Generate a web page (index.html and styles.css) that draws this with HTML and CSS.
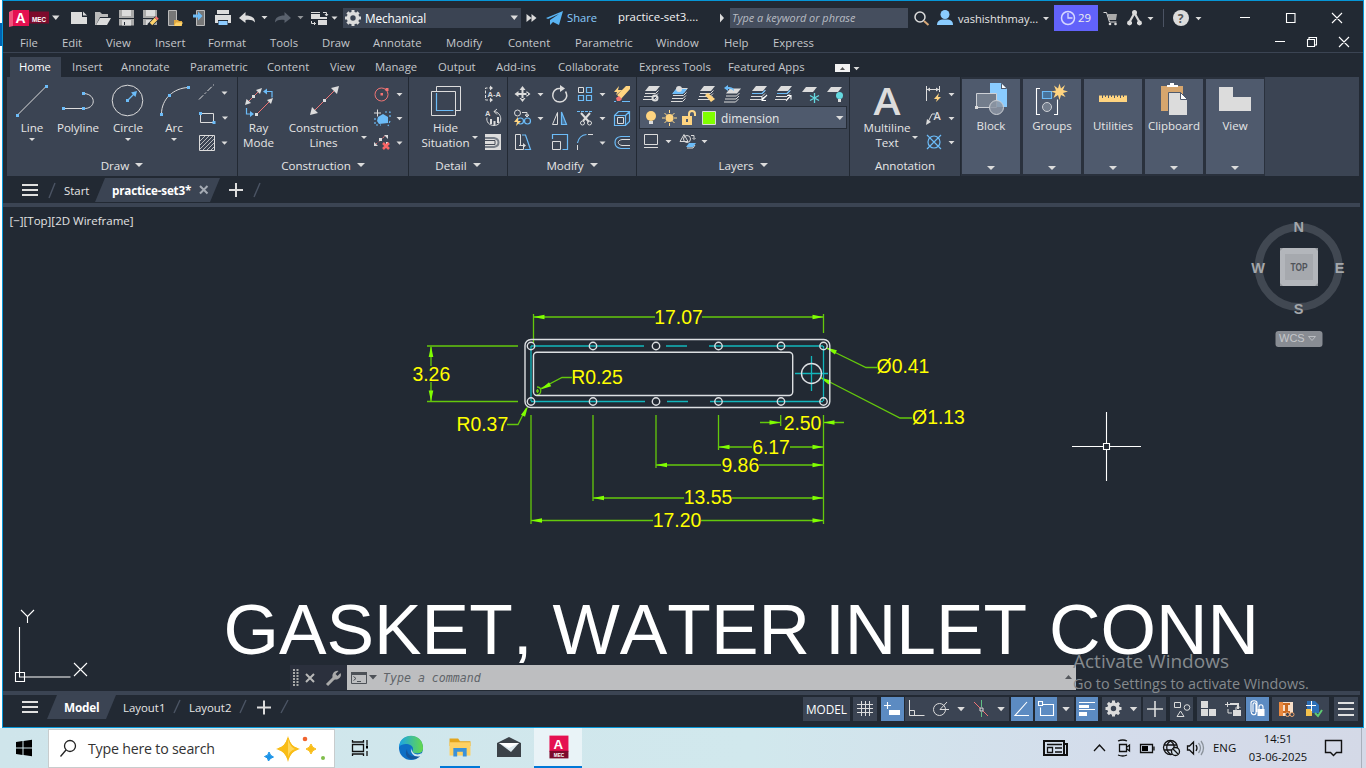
FILE: index.html
```html
<!DOCTYPE html>
<html lang="en">
<head>
<meta charset="utf-8">
<title>practice-set3</title>
<link rel="stylesheet" href="styles.css">
</head>
<body>
<svg width="0" height="0" class="defs"><defs>
<g id="stack"><path class="f" d="M5 0h11l-4 5h-11z"/><path class="s" d="M1 7.500h10.500l3-3M0 10.500h11l3-3M-1 13.500h11.500l3-3"/></g>
<g id="gear"><circle r="4.500" fill="none" stroke="#dcdcdc" stroke-width="3.600"/><path stroke="#dcdcdc" stroke-width="3" d="M0-8v3M0 5v3M-8 0h3M5 0h3M-5.600-5.600l2 2M5.600-5.600l-2 2M-5.600 5.600l2-2M5.600 5.600l-2-2"/></g>
<g id="caret"><path class="f" d="M-3-1.500h6l-3 3.200z"/></g>
<g id="bigcaret"><path class="f" d="M-3.700-2h7.500l-3.700 4.200z"/></g>
<g id="mark"><rect class="fb" x="-1.500" y="-1.500" width="3" height="3"/></g>
<g id="hole"><circle r="3.700"/></g>
<path id="ar" class="arrow" d="M0 0L11-2.300v4.600z"/>
</defs></svg>

<div class="desktop">
<div class="app">
<header class="titlebar">
<svg width="64" height="33" viewBox="3 1 64 33"><path fill="#f0527b" d="M9 12l4-2v16l-4 1z"/><path fill="#e51050" d="M13 10h16v16H13z"/><path fill="#7c0a2c" d="M29 11.500h20v12H29z"/><text x="15.500" y="23" font-family="Liberation Sans" font-size="14" font-weight="700" fill="#fff">A</text><text x="32" y="21.500" textLength="14" lengthAdjust="spacingAndGlyphs" font-family="Liberation Sans" font-size="8" font-weight="700" fill="#fff">MEC</text><path class="f" d="M52 15.500h7.500l-3.700 4.500z"/></svg>
<svg width="25" height="33" viewBox="67 1 25 33"><path class="f" d="M71 12h11v5h5v7H71z"/><path class="f" d="M83 11.500l4 4h-4z"/></svg>
<svg width="24" height="33" viewBox="92 1 24 33"><path fill="#bbb" d="M95 12h5l2 2h6v3h-8l-4 8h-1z"/><path class="f" d="M100 18h11l-4 7H96z"/></svg>
<svg width="24" height="33" viewBox="116 1 24 33"><path fill="#a9a9a9" d="M119 10h15v15.500h-15z"/><path class="f" d="M122 10h9v6h-9zM122 20h9v5.500h-9z"/><path fill="#222933" d="M119 18h15v1h-15zM124 22h1v3h-1z"/></svg>
<svg width="24" height="33" viewBox="140 1 24 33"><path fill="#a9a9a9" d="M143 10h14v15h-14z"/><path class="f" d="M146 10h9v6h-9zM146 20h6v5h-6z"/><path fill="#222933" d="M143 18h14v1h-14z"/><path stroke="#222933" stroke-width="5" d="M149 26l8-8"/><path stroke="#ffd36b" stroke-width="3.500" d="M151 24l5-5"/><path stroke="#fa6f6f" stroke-width="3.500" d="M156 19l1.500-1.500"/></svg>
<svg width="24" height="33" viewBox="164 1 24 33"><path fill="#777" stroke="#bbb" d="M168.500 10.500h8v15h-8z"/><path fill="#dfa842" d="M174 20h4l1 1h3v5h-8z"/><path fill="#ffd36b" d="M176 22.500h7l-2 3.500h-7z"/></svg>
<svg width="24" height="33" viewBox="188 1 24 33"><path fill="#777" stroke="#bbb" d="M196.500 10.500h8v15h-8z"/><path class="fb" d="M193 14.500h5v-3l4.500 4.500-4.500 4.500v-3h-5z"/></svg>
<svg width="24" height="33" viewBox="212 1 24 33"><path class="f" d="M217 10h12v4h-12zM215 15h16v8h-3v-3h-10v3h-3z"/><path fill="#8ccbff" d="M218.500 21h9v4h-9z"/></svg>
<svg width="34" height="33" viewBox="236 1 34 33"><path fill="#ddd" d="M239 18l6.500-6v3.500c6 0 9.500 2 9.500 7-2-2.500-5-3-9.500-2.500v3z"/><use href="#caret" x="264.500" y="17.500"/></svg>
<svg width="36" height="33" viewBox="270 1 36 33"><path fill="#59616d" d="M291 18l-6.500-6v3.500c-6 0-9.500 2-9.500 7 2-2.500 5-3 9.500-2.500v3z"/><use href="#caret" x="300.500" y="17.500" opacity=".6"/></svg>
<svg width="37" height="33" viewBox="306 1 37 33"><path class="f" d="M311 12h9v1h-9zM311 14h9v5h-9zM318 17h9v2h-9zM318 20h9v5h-9z"/><path class="s" d="M323 12.500h3.500v3M325 14l1.500 2 1.500-2M315.500 23.500h-4v-2.500M314 22l1.500 1.500-1.500 1.500"/><use href="#caret" x="334.500" y="18"/></svg>
<div class="workspace"><svg width="22" height="20" viewBox="343 8 22 20"><use href="#gear" x="353" y="18"/></svg><span>Mechanical</span><svg width="14" height="20" viewBox="508 8 14 20"><path class="f" d="M511.500 15.500h7.500l-3.700 4.500z"/></svg></div>
<svg width="46" height="33" viewBox="521 1 46 33"><path class="f" d="M526.500 14l5 4-5 4zM531.500 14l5 4-5 4z"/><path fill="#59b4f3" d="M546 18l17-7-4 14-6-3-3 3v-5l9-6-11 5z"/></svg>
<span class="share">Share</span><span class="doc">practice-set3....</span>
<svg width="12" height="33" viewBox="718 1 12 33"><path class="f" d="M720 13.500l4 4.500-4 4.500z"/></svg>
<div class="find">Type a keyword or phrase</div>
<svg width="50" height="33" viewBox="908 1 50 33"><circle cx="920" cy="17" r="5" class="s" stroke-width="1.500"/><path stroke="#d8a878" stroke-width="2" d="M924 21l4.500 4"/><circle class="fu" cx="945" cy="14.500" r="4.500"/><path class="fu" d="M937 25c0-4 2.500-5 5-5.500h6c3 .5 5 1.500 5 5.500z"/></svg>
<span class="account">vashishthmay...</span>
<svg width="14" height="33" viewBox="1040 1 14 33"><use href="#caret" x="1046" y="18.500"/></svg>
<div class="trial"><svg width="20" height="20" viewBox="0 0 20 20"><circle cx="10" cy="10" r="6.500" fill="none" stroke="#d6d7ff" stroke-width="1.500"/><path fill="none" stroke="#d6d7ff" stroke-width="1.300" d="M10 5v5h4.500"/></svg>29</div>
<svg width="106" height="33" viewBox="1098 1 106 33"><path class="s" d="M1103.500 12.500h3l3 9.500h7"/><path fill="#a9a9a9" d="M1107.500 14h9.500l-1 6h-7z"/><circle class="f" cx="1110" cy="24" r="1.300"/><circle class="f" cx="1115.500" cy="24" r="1.300"/><path fill="none" stroke="#d5d5d5" stroke-width="2.200" d="M1134.500 13l-5.500 10h11l-5.500-10"/><path fill="#222933" d="M1132 22h5v3h-5z"/><circle class="f" cx="1134.500" cy="12.500" r="2.500"/><circle class="f" cx="1129.500" cy="23" r="2.400"/><circle class="f" cx="1139.500" cy="23" r="2.400"/><use href="#caret" x="1150.500" y="18.500"/><path stroke="#4b5363" d="M1163.500 9v18"/><circle class="f" cx="1181" cy="18" r="8"/><text x="1177.700" y="22.500" font-family="Noto Sans" font-weight="700" font-size="12" fill="#555">?</text><use href="#caret" x="1198.500" y="18.500"/></svg>
<svg class="winctl" width="120" height="33" viewBox="1230 1 120 33"><path class="sw" d="M1240 17.500h10M1286.500 13.500h8.500v9h-8.500zM1332 13l10 10M1342 13l-10 10"/></svg>
</header>

<nav class="menubar"><span>File</span><span>Edit</span><span>View</span><span>Insert</span><span>Format</span><span>Tools</span><span>Draw</span><span>Annotate</span><span>Modify</span><span>Content</span><span>Parametric</span><span>Window</span><span>Help</span><span>Express</span>
<svg class="docctl" width="90" height="18" viewBox="1270 34 90 18"><path class="sw" d="M1275 41.500h10M1307.500 39.500h7v7h-7zM1309 39v-1.500h7.500v7.500h-1.500M1339 37l10 10M1349 37l-10 10"/></svg></nav>

<nav class="tabs"><b>Home</b><span>Insert</span><span>Annotate</span><span>Parametric</span><span>Content</span><span>View</span><span>Manage</span><span>Output</span><span>Add-ins</span><span>Collaborate</span><span>Express Tools</span><span>Featured Apps</span>
<svg width="30" height="20" viewBox="832 57 30 20"><path fill="#f2f2f2" d="M835 64h15v8h-15z"/><path fill="#555" d="M840 70h5l-2.500-3z"/><use href="#caret" x="856.500" y="68.500"/></svg></nav>

<section class="ribbon">
<div class="panel draw"><div class="tools">
<div class="big"><svg width="36" height="36" viewBox="14 84 36 36"><path class="s" d="M17.500 115l29-29"/><use href="#mark" x="17.500" y="115.500"/><use href="#mark" x="46.500" y="86.500"/></svg><span>Line</span><i></i></div>
<div class="big"><svg width="36" height="36" viewBox="60 84 36 36"><path class="s" d="M64 108.500h19c13 1 14-14 1-15"/><use href="#mark" x="63.500" y="108.500"/><use href="#mark" x="83.500" y="108.500"/><use href="#mark" x="83.500" y="93.500"/></svg><span>Polyline</span></div>
<div class="big"><svg width="36" height="36" viewBox="110 84 36 36"><circle class="s" cx="127.500" cy="100.500" r="15.300"/><path class="sb" d="M128 100l6-6"/><path class="fb" d="M137 91l-1.500 6-4.500-4.500z"/><use href="#mark" x="127.500" y="100.500"/></svg><span>Circle</span><i></i></div>
<div class="big"><svg width="36" height="36" viewBox="156 84 36 36"><path class="s" d="M161.500 114c0-15 12-26 27-26.500"/><use href="#mark" x="161.500" y="114.500"/><use href="#mark" x="169.500" y="95.500"/><use href="#mark" x="188.500" y="87.500"/></svg><span>Arc</span><i></i></div>
<div class="small">
<svg width="46" height="24" viewBox="191 82 46 24"><path class="s" stroke-dasharray="6 2 2 2" d="M199 99.500l15-15"/><use href="#caret" x="224.500" y="93"/></svg>
<svg width="46" height="24" viewBox="191 106 46 24"><path class="s" d="M200.500 113.500h13v9h-13z"/><use href="#mark" x="200.500" y="113.500"/><use href="#mark" x="214" y="122.500"/><use href="#caret" x="225" y="118"/></svg>
<svg width="46" height="24" viewBox="191 130 46 24"><path class="s" d="M199.500 135.500h15v15h-15z"/><path class="s" stroke-width=".8" d="M200 141l5-5M200 145l9-9M200 149l13-13M203 150l11-11M207 150l7-7M211 150l3-3"/><use href="#caret" x="224.500" y="143"/></svg></div>
</div><div class="name">Draw<u></u></div></div>

<div class="panel construction"><div class="tools">
<div class="big"><svg width="36" height="36" viewBox="241 84 36 36"><path class="sr" d="M247 103l12-12M257 114l14-14"/><path class="f" d="M262 88l-2 6-4-4zM245 105l1.500-6 4.500 4zM273 98l-2 6-4-4zM252 95h3v3h-3zM255 113h3v3h-3z"/><path class="sb" d="M266 91.500h6v6M246.500 108v6h5"/><path class="fb" d="M263 91.500l4-3v6zM254 114l-4-3v6z"/></svg><span>Ray<br>Mode</span></div>
<div class="big"><svg width="36" height="36" viewBox="305 84 36 36"><path class="sr" d="M311 113l25-25"/><path class="f" d="M338 86l-2 8-6-6zM309 115l2-8 6 6zM322 99h3v3h-3z"/></svg><span>Construction<br>Lines</span></div>
<div class="small">
<svg width="40" height="24" viewBox="368 82 40 24"><circle class="sr" cx="381.500" cy="94.500" r="6.500"/><path fill="#f47272" d="M380.500 93h2.500v2.500h-2.500zM385.500 88h3v3h-3z"/><use href="#caret" x="399.500" y="94.500"/></svg>
<svg width="40" height="24" viewBox="368 106 40 24"><path class="fb" d="M378 117l5-3 5 3v6l-9 1-2-3z"/><path class="s" d="M374 113h7M377.500 109.500v7"/><path class="sb" stroke-dasharray="2 2" d="M375 118v7h6M385 112h5v6M390 121l-2 5"/><use href="#caret" x="399.500" y="118.500"/></svg>
<svg width="40" height="24" viewBox="368 130 40 24"><path class="sr" stroke-dasharray="3 2" d="M375 145l11-10"/><path class="f" d="M384 135h4v4zM374 142v4h4zM379 138h3v3h-3zM386 142h2v2h-2z"/><path stroke="#fa6565" stroke-width="2.500" d="M383 143l6 6M389 143l-6 6"/><use href="#caret" x="399.500" y="143"/></svg></div>
</div><i class="side s1"></i><div class="name">Construction<u></u></div></div>

<div class="panel detail"><div class="tools">
<div class="big"><svg width="36" height="36" viewBox="427 84 36 36"><path class="s" d="M435.500 91v-4.500h24v24h-4.500M430.500 91.500h24v24h-24z"/><path class="sb" d="M435.500 93v17.500h17"/></svg><span>Hide<br>Situation</span></div>
<div class="small">
<svg width="25" height="24" viewBox="482 82 25 24"><path class="s" stroke-dasharray="3 1.500" d="M492 88h-6.500v12h6.500"/><path class="f" d="M490 85.500l3 2.500-3 2.500zM490 97.500l3 2.500-3 2.500z"/><text class="tiny" x="487.500" y="97">A-A</text></svg>
<svg width="25" height="24" viewBox="482 106 25 24"><path class="s" d="M494 111.500c9 1 9 14 0 14-5 0-8-4-7-8M497 109l-3 2.500 3 3"/><text class="tiny" x="485" y="116">A</text><path class="f" d="M490 119h2v5h-2zM493.500 121h2v4h-2zM497 117h2v6h-2z"/></svg>
<svg width="25" height="24" viewBox="482 130 25 24"><path class="f" d="M485 134h16v16h-16z"/><path fill="none" stroke="#777e88" stroke-width="2" d="M485 138h9c6 1 6 8 0 9h-9"/><path fill="none" stroke="#444b57" d="M485 140.500h10v4h-10"/></svg></div>
</div><i class="side s2"></i><div class="name">Detail<u></u></div></div>

<div class="panel modify"><div class="tools grid">
<svg width="38" height="24" viewBox="508 82 38 24"><path class="f" d="M522.500 86l3 4h-6zM522.500 102l3-4h-6zM514.500 94l4-3v6zM530.500 94l-4-3v6zM521.500 89h2v10h-2zM517 93h11v2h-11z"/><use href="#caret" x="540.500" y="94.500"/></svg>
<svg width="26" height="24" viewBox="546 82 26 24"><path class="s" stroke-width="1.500" d="M561 88.500c-9-1-11 10-4 13 7 2 12-4 8.500-10"/><path class="f" d="M560 85l5 3.500-5 3.500z"/></svg>
<svg width="36" height="24" viewBox="572 82 36 24"><path class="s" d="M578.500 87.500h5v5h-5z"/><path class="sb" d="M586.500 87.500h5v5h-5zM578.500 95.500h5v5h-5zM586.500 95.500h5v5h-5z"/><use href="#caret" x="602.500" y="94.500"/></svg>
<svg width="28" height="24" viewBox="608 82 28 24"><path class="fy" d="M626 86h4v3l-9 10-4-4zM614 92l5-6-1 4h4l-6 5 1-3z"/><path fill="#f47272" d="M619 96l3 3-2 2h-3l-1-3z"/><path class="sb" d="M614 101.500h2M622 101.500h8"/></svg>
<svg width="38" height="24" viewBox="508 106 38 24"><circle class="s" cx="517.500" cy="113" r="3"/><path class="s" d="M522 112.500h5v3M525 115h4l-2 2z"/><circle class="sb" cx="520.500" cy="121" r="3"/><circle class="sb" cx="527.500" cy="121" r="3"/><path class="fy" d="M518 117l-4 5h3l-1 4 5-5h-3z"/><use href="#caret" x="540.500" y="118.500"/></svg>
<svg width="26" height="24" viewBox="546 106 26 24"><path class="s" d="M552.500 124.500l5-12v12z"/><path class="sb" fill="#48739b" d="M561.500 112l5 12.500h-5z"/></svg>
<svg width="36" height="24" viewBox="572 106 36 24"><path class="sb" stroke-dasharray="3 1" d="M577 111.500h16"/><path class="s" stroke-width="2" d="M581 113l8 9M590 113l-7 8"/><circle class="s" cx="582.500" cy="123" r="2"/><circle class="s" cx="589.500" cy="123" r="2"/><use href="#caret" x="602.500" y="118.500"/></svg>
<svg width="28" height="24" viewBox="608 106 28 24"><path class="sb" d="M614.500 115.500l4-4h11v10l-4 4h-11zM614.500 115.500h11v10M625.500 115.500l4-4"/><path class="s" d="M617.500 117.500h6v6h-6z"/></svg>
<svg width="38" height="24" viewBox="508 130 38 24"><path class="s" d="M520.500 145v-10.500h-5v15h8v-4M519 145.500h5"/><path class="f" d="M523 143l3 2.500-3 2.500z"/><path class="sb" d="M522 135h3.500l5 14.500h-6"/></svg>
<svg width="26" height="24" viewBox="546 130 26 24"><path class="sb" d="M552.500 139v-4.500h15v15h-5"/><path class="s" d="M552.500 141.500h8v8h-8z"/></svg>
<svg width="36" height="24" viewBox="572 130 36 24"><path class="sb" d="M577.500 143c1-5 4-8 9-8.500"/><path class="s" d="M577.500 145v5M588 134.500h5"/><use href="#caret" x="602.500" y="143"/></svg>
<svg width="28" height="24" viewBox="608 130 28 24"><path class="sb" d="M630 136.500h-9c-8 1-8 11 0 12h9"/><path class="s" d="M630 139.500h-8c-5 1-5 5 0 6h8"/></svg>
</div><div class="name">Modify<u></u></div></div>

<div class="panel layers"><div class="layer-tools">
<div class="lrow">
<svg width="30" height="24" viewBox="639 82 30 24"><use href="#stack" x="644" y="86"/><circle cx="655" cy="98" r="2.500" class="s" stroke-width="2"/></svg>
<svg width="26" height="24" viewBox="669 82 26 24"><use href="#stack" x="672" y="88"/><path class="fb" d="M672 94h11l4-5h-11z"/><circle class="f" cx="679" cy="89" r="3"/></svg>
<svg width="27" height="24" viewBox="695 82 27 24"><use href="#stack" x="699" y="86"/><path class="fy" d="M705 95l3-2 7 6-4 3z"/></svg>
<svg width="26" height="24" viewBox="722 82 26 24"><use href="#stack" x="725" y="88.500"/><path class="fb" d="M724 88l4-3v2c4 0 6 1 6 4-2-2-3-2-6-2v2z"/></svg>
<svg width="26" height="24" viewBox="748 82 26 24"><use href="#stack" x="751" y="86"/><path class="sb" d="M752 93.500h10l3-3"/><path class="sw" d="M767 95l-5 5M762 96.500v4h4"/></svg>
<svg width="26" height="24" viewBox="774 82 26 24"><use href="#stack" x="776" y="86"/><path class="sb" d="M777 93.500h10l3-3"/><path class="sw" d="M786 101l4.500-5M787 95.500h4v4"/></svg>
<svg width="25" height="24" viewBox="800 82 25 24"><path class="f" d="M806 87h11l-4 5h-11z"/><path stroke="#65d9e0" stroke-width="1.300" d="M814.500 93v10M810 95.500l9 5M810 100.500l9-5"/></svg>
<svg width="23" height="24" viewBox="825 82 23 24"><path class="f" d="M831 87h11l-4 5h-11z"/><circle fill="#65d9e0" cx="839.500" cy="95.500" r="3.500"/><path class="f" d="M838 99h3v3h-3z"/></svg>
</div>
<div class="combo"><svg width="80" height="20" viewBox="640 108 80 20"><circle class="fy" cx="651" cy="116" r="5"/><path class="f" d="M649 121h4v3h-4z"/><circle class="fy" cx="669.500" cy="118" r="4"/><path stroke="#ffd98a" d="M669.500 110v3M669.500 123v3M662 118h3M674 118h3M664.500 113l2 2M674.500 113l-2 2M664.500 123l2-2M674.500 123l-2-2"/><path class="fy" d="M682 116h10v9h-10z"/><path fill="none" stroke="#ffd98a" stroke-width="2" d="M689 116v-2c0-4 6-4 6 0v2"/><path fill="#4f5a6d" d="M686 119h2v3h-2z"/><path fill="#80ff00" stroke="#d9d9d9" d="M702.500 111.500h13v13h-13z"/></svg><span>dimension</span><svg width="12" height="20" viewBox="835 108 12 20"><path class="f" d="M837 116h7.500l-3.700 4z"/></svg></div>
<div class="lrow">
<svg width="36" height="24" viewBox="639 130 36 24"><path class="s" d="M644.500 135.500h13v10h-13zM644 148.500h14"/><use href="#caret" x="668.500" y="142.500"/></svg>
<svg width="36" height="24" viewBox="675 130 36 24"><path class="s" d="M680 142.500l4-7 4 7z"/><circle class="s" cx="687" cy="140" r="3.500"/><path class="s" d="M691 136.500h3v3M692.500 139l1.500 1.500 1.500-1.500M687 149h6l2-3"/><path class="fb" d="M689 144h7l-3 4h-7z"/><use href="#caret" x="704.500" y="142.500"/></svg>
</div></div><div class="name">Layers<u></u></div></div>

<div class="panel annotation"><div class="tools">
<div class="big"><svg width="36" height="36" viewBox="868 84 36 36"><text x="872.500" y="115" textLength="27" lengthAdjust="spacingAndGlyphs" font-family="Open Sans" font-weight="600" font-size="38" fill="#dcdcdc">A</text></svg><span>Multiline<br>Text</span></div>
<div class="small">
<svg width="36" height="24" viewBox="924 82 36 24"><path class="s" d="M926.500 86v15M939.500 86v6M927 89.500h12"/><path class="f" d="M927 89.500l3-2v4zM939 89.500l-3-2v4z"/><path class="fy" d="M939 93l-5 6h3l-1 3 5-5h-3z"/><use href="#caret" x="951.500" y="94.500"/></svg>
<svg width="36" height="24" viewBox="924 106 36 24"><path class="s" d="M928 122l4-8h3"/><path class="f" d="M926 125l1-6 4 3z"/><text x="933.500" y="120" font-family="Open Sans" font-size="11" font-weight="600" fill="#dcdcdc">A</text><use href="#caret" x="951.500" y="118.500"/></svg>
<svg width="36" height="24" viewBox="924 130 36 24"><circle class="sb" cx="934" cy="142" r="6"/><path class="sb" d="M927 135l14 14M941 135l-14 14"/><use href="#caret" x="951.500" y="142.500"/></svg></div>
</div><i class="side s3"></i><div class="name">Annotation</div></div>

<div class="groups">
<div class="group"><svg width="46" height="38" viewBox="968 81 46 38"><path class="fu" d="M990 83h11l6 6v18h-17z"/><path fill="#4f5a6d" d="M1001 83v6h6z"/><path fill="#fff" d="M1002 84l4 4h-4z"/><path fill="#737d8c" stroke="#cdd0d5" d="M976.500 93.500h20v14h-20z"/><circle fill="#8c95a3" fill-opacity=".85" stroke="#cdd0d5" cx="996.500" cy="107.500" r="7"/><path class="f" d="M975 106h3v3h-3z"/></svg><span>Block</span><u></u></div>
<div class="group"><svg width="46" height="38" viewBox="1029 81 46 38"><path class="sw" d="M1040 88.500h-3.500v26h3.500M1054 114.500h3.500v-15"/><path class="sb" fill="#52779a" d="M1042.500 91.500h9v7h-9z"/><circle cx="1047" cy="107" r="4.500" fill="#737d8c" stroke="#cdd0d5"/><path class="fy" d="M1059.500 83.500l1.500 5 4-3.500-2 5 5 1.500-5 1.500 2.500 4-4.500-2-1.500 5-1.500-5-4.500 3 2-5-4.500-1.500 5-1-2-5 4 3z"/></svg><span>Groups</span><u></u></div>
<div class="group"><svg width="46" height="38" viewBox="1090 81 46 38"><path class="fy" d="M1099 95.500h28v6.500h-28z"/><path stroke="#4f5a6d" d="M1102.500 95v3M1105.500 95v2M1108.500 95v3M1111.500 95v2M1114.500 95v3M1117.500 95v2M1120.500 95v3M1123.500 95v2"/></svg><span>Utilities</span><u></u></div>
<div class="group"><svg width="46" height="38" viewBox="1151 81 46 38"><path fill="#d7a66d" d="M1161 86h22v25h-22z"/><path fill="#fff" d="M1167 87v-2h3v-2h4v2h4v2z"/><path fill="#dcdcdc" stroke="#4f5a6d" d="M1168.500 92.500h12l7 7v20h-19z"/><path fill="#fff" stroke="#4f5a6d" d="M1180.500 92.500v7h7z"/><path fill="#4f5a6d" d="M1168 115h20v4h-20z"/></svg><span>Clipboard</span><u></u></div>
<div class="group"><svg width="46" height="38" viewBox="1212 81 46 38"><path class="f" d="M1219 87h14v10h18v14h-32z"/></svg><span>View</span><u></u></div>
</div>
</section>

<div class="filetabs">
<svg width="61" height="26" viewBox="3 178 61 26"><path class="bars" d="M22 186h16M22 191h16M22 196h16"/><path class="slash" d="M49 199l6-15"/></svg>
<span class="start">Start</span>
<div class="filetab"><b>practice-set3*</b><svg width="10" height="10" viewBox="0 0 10 10"><path stroke="#a5abb4" stroke-width="2" d="M1 1l7.500 7.500M8.500 1l-7.500 7.500"/></svg></div>
<svg width="46" height="26" viewBox="220 178 46 26"><path stroke="#ddd" stroke-width="2" d="M229 191h14M236 184v14"/><path class="slash" d="M254 198l6-14"/></svg>
</div>

<main class="viewport">
<svg class="drawing" width="1357" height="484" viewBox="3 207 1357 484">
<text class="vp" x="9.500" y="225" textLength="124">[−][Top][2D Wireframe]</text>
<g class="dim">
<path d="M533.500 314v29M823.500 314v19M534 317h121M702 317h121M427 346h91M427 401.500h91M431 347v19M431 382v19M531 415v109M593 415v86M656 415v53M718.500 415v35M780.700 415v11M823.500 415v109M760 422.500h21M824 422.500h20M719 447h33M790 447h33M656 465h65M759 465h64M593 498h91M732 498h91M531 520.500h122M701 520.500h122M826 348l40 19.500h11M820 377l80 41h12M540 389l22-11.500h10M507 424.500h11l8-16"/>
<path d="M537 395c5-1 5-8 0-8M537.500 389v4M536 391h3"/>
<use href="#ar" x="533.500" y="317"/><use href="#ar" x="718.500" y="447"/><use href="#ar" x="656" y="465"/><use href="#ar" x="593" y="498"/><use href="#ar" x="531" y="520.500"/><use href="#ar" x="823.500" y="422.500"/>
<use href="#ar" transform="translate(823.500 317) rotate(180)"/><use href="#ar" transform="translate(780.500 422.500) rotate(180)"/><use href="#ar" transform="translate(823.500 447) rotate(180)"/><use href="#ar" transform="translate(823.500 465) rotate(180)"/><use href="#ar" transform="translate(823.500 498) rotate(180)"/><use href="#ar" transform="translate(823.500 520.500) rotate(180)"/>
<use href="#ar" transform="translate(431 346) rotate(90)"/><use href="#ar" transform="translate(431 401.500) rotate(-90)"/><use href="#ar" transform="translate(826 347.500) rotate(26)"/><use href="#ar" transform="translate(820 377.500) rotate(27)"/><use href="#ar" transform="translate(540.500 389.500) rotate(-29)"/><use href="#ar" transform="translate(528 406) rotate(117)"/>
</g>
<path class="center" d="M531 346h113M666 346h21M709 346h114M531 401.500h114M667 401.500h21M710 401.500h113M531 346v55M823.500 346v55M795 373.500h33M811.500 356v35"/>
<g class="part"><rect x="525" y="339.500" width="304.800" height="68" rx="6"/><rect x="533.500" y="352.200" width="259.200" height="43.300" rx="3.500"/><circle cx="811.500" cy="373.500" r="10"/>
<use href="#hole" x="531" y="346"/><use href="#hole" x="593" y="346"/><use href="#hole" x="656" y="346"/><use href="#hole" x="718.500" y="346"/><use href="#hole" x="781" y="346"/><use href="#hole" x="823.500" y="346"/><use href="#hole" x="531" y="401.500"/><use href="#hole" x="593" y="401.500"/><use href="#hole" x="656" y="401.500"/><use href="#hole" x="718.500" y="401.500"/><use href="#hole" x="781" y="401.500"/><use href="#hole" x="823.500" y="401.500"/></g>
<g class="val"><text x="678.500" y="323.500">17.07</text><text x="431.300" y="380.500">3.26</text><text x="597" y="384.300">R0.25</text><text x="482.300" y="431.300">R0.37</text><text x="802.500" y="429.500">2.50</text><text x="771" y="453.700">6.17</text><text x="740.300" y="471.500">9.86</text><text x="708" y="504.300">13.55</text><text x="677" y="526.500">17.20</text><text x="903" y="373.300">Ø0.41</text><text x="938.500" y="424.300">Ø1.13</text></g>
<text class="caption" y="654.300"><tspan x="223.500">GASKET,</tspan> <tspan x="552.500">WATER</tspan> <tspan x="825">INLET</tspan> <tspan x="1049">CONN</tspan></text>
<path class="sw" d="M1072 446.500h31M1110 446.500h31M1106.500 412v31M1106.500 450v31M1103.500 443.500h6v6h-6z"/>
<path class="sw" d="M19.500 627v50h51M15.500 672.500h9v9h-9zM21 610l6.500 6.500v6.500M34 610l-6.500 6.500M74 663l13 13M87 663l-13 13"/>
<circle cx="1298.700" cy="267" r="40" fill="none" stroke="#414852" stroke-width="8"/>
<g class="compass"><text x="1298.700" y="232">N</text><text x="1258.200" y="272.500">W</text><text x="1339.500" y="272.500">E</text><text x="1298.700" y="313.500">S</text></g>
<path fill="#92969b" d="M1280 248h38v38h-38z"/><path fill="#b3b6bb" d="M1283 248h32l3 3v32l-3 3h-32l-3-3v-32z"/><path fill="#a6a9ae" d="M1285 254h28v26h-28z"/><text x="1299" y="271" text-anchor="middle" textLength="17" lengthAdjust="spacingAndGlyphs" font-family="Liberation Sans" font-size="10" font-weight="700" fill="#4f5359">TOP</text>
<rect x="1275.500" y="331" width="47" height="16" rx="3" fill="#888c93"/><text x="1279" y="342" font-family="Liberation Sans" font-size="11" fill="#c5c7ca">WCS</text><path fill="none" stroke="#babdc1" d="M1308.500 336.500h7l-3.500 4z"/>
</svg>
<div class="watermark"><p>Activate Windows</p><small>Go to Settings to activate Windows.</small></div>
<div class="command"><svg width="57" height="25" viewBox="290 665 57 25"><path stroke="#aaa" stroke-width="2" stroke-dasharray="2 1" d="M294 669v17M297.500 669v17"/><path stroke="#b8b8b8" stroke-width="2" d="M306 674l8 8M314 674l-8 8"/><path stroke="#aaa" stroke-width="3" d="M327 685l7-7"/><path fill="#aaa" d="M338.500 671c-4-1-8 4-5 8 4 2 9-2 7-6l-3 3-2-2z"/></svg>
<div class="cmdin"><svg width="36" height="25" viewBox="347 665 36 25"><path fill="none" stroke="#4d5157" d="M351.500 672.500h15v11h-15z"/><path fill="#4d5157" d="M351 672h16v3h-16zM369 675h8l-4 4.500z"/><path fill="none" stroke="#4d5157" d="M353.500 676.500l2.500 2-2.500 2M357 681.500h4"/></svg><span>Type a command</span><svg class="up" width="14" height="25" viewBox="1062 665 14 25"><path fill="#55585d" d="M1065 679h7l-3.500-4z"/></svg></div></div>
</main>

<footer class="status">
<svg width="44" height="26" viewBox="3 695 44 26"><path class="bars" d="M22 702h16M22 707h16M22 712h16"/></svg>
<div class="model">Model</div><span class="lay">Layout1</span><svg width="15" height="26" viewBox="170 695 15 26"><path class="slash" d="M174 713l6-13"/></svg><span class="lay">Layout2</span>
<svg width="60" height="26" viewBox="236 695 60 26"><path class="slash" d="M240 713l6-13M281 713l7-13"/><path stroke="#ddd" stroke-width="2" d="M257 707.500h14M264 700.500v14"/></svg>
<div class="cells">
<div class="mode">MODEL</div>
<svg width="24" height="24" viewBox="853 697 24 24"><path class="s" d="M857 704.500h16M857 708.500h16M857 712.500h16M861.500 701v15M865.500 701v15M869.500 701v15"/></svg>
<svg class="on g4" width="23" height="24" viewBox="881 697 23 24"><path class="sw" d="M884 705.500h7M887.500 702v7"/><path fill="#fff" d="M889 710h11v5h-11z"/></svg>
<svg class="wide" width="104" height="24" viewBox="905 697 104 24"><path class="s" d="M909.500 700v15.500h15M909.500 710.500h5v5"/><circle class="s" cx="939.500" cy="709.500" r="6"/><path class="s" d="M947 702l-7 7.500h9"/><use href="#bigcaret" x="961" y="709"/><path class="sr" d="M974 702l6 6M983 711l5 5"/><path stroke="#5fbf84" d="M981.500 700v7M981.500 712v5"/><path class="s" d="M980 708h3v3h-3z"/><use href="#bigcaret" x="1001" y="709"/></svg>
<svg class="on" width="22" height="24" viewBox="1011 697 22 24"><path class="sw" d="M1027 702l-12 13.500h14"/></svg>
<svg class="on" width="22" height="24" viewBox="1035 697 22 24"><path class="sw" d="M1043 704.500h10.500v11h-13v-8M1038.500 701.500h4v4h-4z"/></svg>
<svg class="tight" width="17" height="24" viewBox="1057 697 17 24"><use href="#bigcaret" x="1066" y="709"/></svg>
<svg class="on" width="22" height="24" viewBox="1076 697 22 24"><path fill="#fff" d="M1079 702h16v1h-16zM1079 705h10v3h-10zM1079 709h16v1h-16zM1079 712h8v4h-8z"/></svg>
<svg class="g4" width="39" height="24" viewBox="1102 697 39 24"><use href="#gear" x="1113.500" y="708.500"/><use href="#bigcaret" x="1133.500" y="709"/></svg>
<svg width="23" height="24" viewBox="1143 697 23 24"><path class="s" stroke-width="1.600" d="M1147 709h16M1155 701v16"/></svg>
<svg class="g4" width="23" height="24" viewBox="1170 697 23 24"><path class="s" d="M1174.500 702.500h6v5h-6zM1177 716.500l3.500-5.500 3.500 5.500z"/><circle class="s" cx="1187" cy="707.500" r="2.800"/></svg>
<svg class="g4" width="48" height="24" viewBox="1197 697 48 24"><path class="f" d="M1201 701h7v7h-7zM1201 709h7v7h-7zM1209 709h7v7h-7zM1230 703h9v6h-2v-4h-7zM1233 710h8v6h-8z"/><path class="s" d="M1225 704.500h5M1227.500 702v5M1228 709v4h4M1236 710v-2c0-2 4-2 4 0"/></svg>
<svg class="on near" width="23" height="24" viewBox="1246 697 23 24"><path class="sw" d="M1251 703c0-3 6-3 6 0v9M1251 702v9c0 4 4 5 5 2v-8c0-3-3-3-3 0v7M1259 709v-2c0-3 4-3 4 0v2"/><path fill="#fff" d="M1257.500 709h7v7h-7z"/></svg>
<svg class="g3" width="57" height="24" viewBox="1272 697 57 24"><path fill="#e9893f" d="M1279 702h4v14h-4z"/><path fill="#f7dfc9" d="M1283 702h10v14h-10z"/><path fill="#c96a22" d="M1283 703h7v2h-2v6h2v2h-7v-2h2v-6h-2z"/><circle cx="1287.500" cy="714.500" r="2" fill="#3b4453" stroke="#f0a56b"/><circle cx="1292" cy="714.500" r="2" fill="#3b4453" stroke="#f0a56b"/><path fill="#2d6fb7" d="M1307 701h8l4 4v8h-12z"/><path fill="#f4c14c" d="M1306 709h6v7h-6z"/><path stroke="#fff" d="M1306 705.500h10M1311.500 701v10"/><path fill="none" stroke="#5fca73" stroke-width="2" d="M1315 713l3 3 4-6"/></svg>
<svg class="last" width="24" height="24" viewBox="1334 697 24 24"><path class="bars" d="M1338 703h16M1338 709h16M1338 715h16"/></svg>
</div></footer>
</div>
<aside class="edge-strip"></aside>
</div>

<div class="taskbar">
<svg width="48" height="40" viewBox="0 728 48 40"><path d="M16 742l6.500-1v6.500H16zM23.500 741l8.500-1.200v7.700h-8.500zM16 748.500h6.500v6.500l-6.500-1zM23.500 748.500h8.500v7.700l-8.500-1.200z"/></svg>
<div class="search"><svg width="39" height="38" viewBox="49 729 39 38"><circle cx="70" cy="745" r="5.500" fill="none" stroke="#222" stroke-width="1.300"/><path stroke="#222" stroke-width="1.300" d="M66 749l-5.500 6.500"/></svg><span>Type here to search</span><svg class="spark" width="72" height="38" viewBox="262 729 72 38"><path fill="#f9bd18" d="M288 735q2 11 12 13-10 2-12 13-2-11-12-13 10-2 12-13z"/><path fill="#f9bd18" stroke="#f9bd18" stroke-width="2" stroke-linejoin="round" d="M288 738q2 8 9 10-7 2-9 9-2-7-9-9 7-2 9-10z"/><path fill="#ffd75a" d="M288 738q2 8 7 10-6 2-7 8z"/><path fill="#1c94e8" stroke="#1c94e8" d="M269 751q1 4 4.500 5-3.500 1-5 4-.5-4-4-4.500 4-.5 4.500-4.500z"/><path fill="#f9bd18" stroke="#f9bd18" d="M311 743q1 4 5 5-4 1-5 5-1-4-5-5 4-1 5-5z"/><circle cx="305" cy="738" r="2.300" fill="#f0642f"/><circle cx="323" cy="757" r="2" fill="#80bd4b"/></svg></div>
<svg width="55" height="40" viewBox="335 728 55 40"><path fill="none" stroke="#111" stroke-width="1.300" d="M352.500 740v2h11v-2M352.500 756v-2h11v2M352.500 744.500h11v7h-11zM367 740v5M367 751v5"/><path d="M366 745.500h2v3h-2z"/></svg>
<svg width="50" height="40" viewBox="390 728 50 40"><defs><linearGradient id="eg"><stop offset="0" stop-color="#1aa3e8"/><stop offset="1" stop-color="#65d94a"/></linearGradient></defs><circle cx="411" cy="748" r="12" fill="#0d6fc5"/><path fill="url(#eg)" d="M399 747c1-15 24-15 24 1 0 5-4 6-9 5-3-1-1-2-1-4 0-5-10-7-14-2z"/><path fill="#14569c" d="M407 749c0 7 7 9 14 6-6 8-19 4-14-6z"/><path fill="#d3e7ed" d="M411 748c1 6 6 8 11 5l-1 3c-6 2-11-2-10-8z"/></svg>
<svg class="open" width="40" height="40" viewBox="440 728 40 40"><path fill="#e3a51c" d="M449 739h9l2 3h11v5h-22z"/><path fill="#fed163" d="M449 743h22v14h-22z"/><path fill="#3a92d8" d="M453 749h14v9h-4v-5h-6v5h-4z"/></svg>
<svg width="54" height="40" viewBox="480 728 54 40"><path fill="#3b4248" d="M497 743l12-6 12 6v14h-24z"/><path fill="#dce9ee" d="M499 743l20 0-8 9-4-3-8-6z"/><path fill="#fff" d="M499 743h20l-10 5z"/></svg>
<svg class="open active" width="48" height="40" viewBox="534 728 48 40"><path fill="#e51050" d="M549 736h20v17h-20z"/><path fill="#7c0a2c" d="M549 752h20v8h-20z"/><text x="553.300" y="750" font-family="Liberation Sans" font-size="14" font-weight="700" fill="#fff">A</text><text x="553.500" y="758.500" font-family="Liberation Sans" font-size="5" font-weight="700" fill="#fff">MEC</text></svg>
<svg class="tray" width="175" height="40" viewBox="1035 728 175 40"><g fill="none" stroke="#111" stroke-width="1.300"><path stroke-width="2" d="M1044 741h20v14h-20zM1065 744h2v11h-3"/><path d="M1047.500 747.500h5v5h-5zM1055 748h7M1055 752h7M1047 744.500h15M1094 751l5.500-6 5.500 6M1119.500 744.500h7v7h-7zM1127 747l2.500-2v6l-2.500-2M1118 741q5-2 9 0M1118 755q5 2 9 0M1140.500 744.500h12v8h-12zM1154 746.500v4"/><circle cx="1170.500" cy="747.500" r="7"/><path d="M1164 745h13M1164 750h8M1170.500 741c-5 3-5 10 0 13M1170.500 741c4 3 4 6 3 8"/><circle cx="1175.500" cy="751.500" r="4" fill="#d3dfe9"/><path d="M1173 749l5 5M1187.500 746h2l4-4v12l-4-4h-2zM1196 745q2 3 0 6"/><path stroke="#8b939b" d="M1198.500 743q4 5 0 10M1201 741q5 7 0 14"/></g><path d="M1142 746h6v5h-6z"/></svg>
<span class="lang">ENG</span><div class="clock"><span>14:51</span><span>03-06-2025</span></div>
<svg width="46" height="40" viewBox="1320 728 46 40"><path fill="none" stroke="#111" stroke-width="1.400" d="M1325.500 740.500h16v12h-5l-3 3-3-3h-5z"/><path stroke="#a9b0bb" d="M1361.500 728v40"/></svg>
</div>
</body>
</html>
```
FILE: styles.css
```css
* { box-sizing: border-box; }
body { margin: 0; width: 1366px; height: 768px; overflow: hidden; background: #fff; font-family: "Open Sans", "Noto Sans", sans-serif; font-size: 11.4px; color: #e6e6e6; white-space: nowrap; }
svg { display: block; flex: none; }
.defs { position: absolute; }
.f { fill: #dcdcdc; }
.fb { fill: #6cbcf8; }
.fu { fill: #8accff; }
.fy { fill: #ffd480; }
.s { fill: none; stroke: #dcdcdc; }
.sw { fill: none; stroke: #fff; stroke-width: 1.1; }
.sb { fill: none; stroke: #6cbcf8; stroke-width: 1.2; }
.sb[fill] { fill: #48739b; }
.sr { fill: none; stroke: #ee7474; }
.bars { stroke: #e0e0e0; stroke-width: 2; }
.slash { stroke: #4b5464; stroke-width: 1.4; }
.tiny { font: 700 7.5px "Liberation Sans", sans-serif; fill: #dcdcdc; }

.desktop { display: flex; height: 728px; padding-left: 2px; background: linear-gradient(#fff 23px, #0063b1 23px, #0063b1 46px, #fff 46px); }
.app { width: 1362px; height: 728px; border: 1px solid #0696d7; background: #222933; }
.edge-strip { width: 2px; background: #f4f4f4; }

.titlebar { display: flex; align-items: center; height: 33px; }
.workspace { display: flex; align-items: center; width: 178px; height: 20px; background: #3b4453; color: #fff; font-size: 11.8px; letter-spacing: -.1px; }
.workspace span { flex: 1; }
.share { width: 51px; color: #8accff; font-size: 11.2px; }
.doc { width: 100px; margin-top: -3px; color: #f2f2f2; }
.find { width: 178px; height: 20px; line-height: 20px; padding-left: 2px; background: #454e5e; color: #b8bcc3; font-style: italic; font-size: 10.9px; }
.account { width: 82px; padding-top: 1px; font-size: 11.1px; }
.trial { display: flex; align-items: center; width: 44px; height: 26px; padding-left: 4px; background: #6262fa; font-size: 11.4px; color: #eee; }
.winctl { margin-left: 26px; }

.menubar { display: grid; grid-template-columns: 42px 44px 49px 53px 62px 52px 51px 73px 62px 67px 81px 68px 49px 497px 90px; align-items: center; height: 19px; padding-left: 17px; color: #c4c7cb; border-bottom: 1px solid #3b4453; font-size: 11.3px; }
.menubar span { margin-top: -2px; }
.tabs { display: grid; grid-template-columns: 51px 49px 69px 77px 63px 45px 63px 58px 62px 81px 89px 115px 30px; height: 24px; padding: 4px 0 0 7px; line-height: 20px; color: #c4c7cb; font-size: 11.3px; }
.tabs b { width: 51px; padding-left: 9px; background: #3b4453; color: #fff; font-weight: 400; }
.tabs span { padding-left: 11px; }

.ribbon { display: flex; height: 99px; margin: 0 4px; background: #3b4453; }
.panel { position: relative; border-right: 1px solid #222933; }
.draw { width: 231px; }
.construction { width: 171px; }
.detail { width: 99px; }
.modify { width: 129px; }
.layers { width: 213px; }
.annotation { width: 111px; }
.tools { display: grid; height: 80px; }
.draw .tools { grid-template-columns: 50px 42px 58px 34px 46px; }
.construction .tools { grid-template-columns: 41px 89px 40px; }
.detail .tools { grid-template-columns: 73px 25px; }
.annotation .tools { grid-template-columns: 74px 36px; }
.modify .tools { grid-template: repeat(3, 24px) / 38px 26px 36px 28px; padding-top: 5px; }
.big { display: flex; flex-direction: column; align-items: center; padding-top: 7px; line-height: 15px; text-align: center; font-size: 11.6px; }
.big i, .side { width: 0; height: 0; margin-top: 3px; border: 3px solid transparent; border-top: 3px solid #dcdcdc; border-bottom: 0; }
.side { position: absolute; top: 56px; }
.s1 { right: 41px; }
.s2 { right: 29px; }
.s3 { right: 42px; }
.small { display: flex; flex-direction: column; padding-top: 5px; }
.name { display: flex; align-items: center; justify-content: center; gap: 6px; height: 16px; font-size: 11.6px; }
.name u, .group u { border: 4px solid transparent; border-top-color: #dcdcdc; border-bottom: 0; }
.layer-tools { height: 80px; padding: 5px 2px 0; }
.lrow { display: flex; height: 24px; }
.combo { display: flex; align-items: center; width: 208px; height: 23px; border: 1px solid #262d38; background: #4f5a6d; }
.combo span { flex: 1; padding-left: 1px; font-size: 11.9px; }
.groups { display: flex; gap: 3px; width: 304px; padding: 2px 0 2px 1px; background: #2a313d; }
.group { display: flex; flex-direction: column; align-items: center; width: 58px; padding-top: 2px; background: #4f5a6d; font-size: 11.5px; line-height: 15px; }
.group span { margin-top: -1px; }
.group u { margin-top: 33px; }

.filetabs { display: flex; align-items: center; height: 31px; margin: 0 3px 0 0; padding: 3px 0 2px; border-bottom: 4px solid #3b4453; }
.start { width: 31px; }
.filetab { display: flex; align-items: center; gap: 9px; width: 125px; height: 24px; padding-left: 17px; background: #3b4453; clip-path: polygon(10px 0, 100% 0, 115px 100%, 0 100%); color: #fff; font-size: 11.7px; letter-spacing: -.1px; }
.filetab b { width: 78px; font-weight: 700; letter-spacing: -.2px; }

.viewport { position: relative; height: 484px; }
.vp { font-size: 11.5px; fill: #e4e4e4; }
.dim path { fill: none; stroke: #64c80c; stroke-width: 1.3; }
.arrow, .dim .arrow { fill: #80ff00; stroke: none; }
.center { stroke: #12b6bc; stroke-width: 1.3; }
.part { fill: none; stroke: #dcdfe2; stroke-width: 1.4; }
.val { font: 19.4px "Liberation Sans", sans-serif; fill: #ff0; text-anchor: middle; }
.caption { font: 71.3px "Liberation Sans", sans-serif; font-kerning: none; fill: #fff; }
.compass { font: 700 14.5px "Liberation Sans", sans-serif; fill: #a4a7ab; text-anchor: middle; }
.watermark { position: absolute; left: 1070px; top: 443px; color: #858a8e; line-height: 23px; z-index: 2; }
.watermark p { margin: 0; font-size: 19px; }
.watermark small { display: block; font-size: 14.4px; line-height: 22px; }
.command { position: absolute; left: 287px; top: 458px; display: flex; width: 786px; height: 25px; background: #2b303d; }
.cmdin { display: flex; align-items: center; flex: 1; background: #bdbec0; color: #606469; font: italic 11.6px "DejaVu Sans Mono", monospace; }
.up { margin-left: auto; }

.status { display: flex; height: 36px; margin-right: 3px; border-top: 4px solid #3b4453; }
.model { width: 69px; height: 24px; line-height: 25px; padding-left: 17px; background: #3b4453; clip-path: polygon(10px 0, 100% 0, 59px 100%, 0 100%); color: #fff; font-weight: 700; font-size: 11.8px; letter-spacing: -.2px; }
.lay { width: 47px; line-height: 25px; margin-left: 4px; }
.model + .lay { margin-left: 7px; }
.cells { display: flex; margin: 2px 2px 0 auto; height: 24px; }
.cells > * { background: #3b4453; margin-left: 2px; }
.cells .mode { width: 47px; margin: 0 1px 0 0; line-height: 24px; text-align: center; color: #fff; font-size: 11.8px; }
.cells .on { background: #5c8bc2; }
.cells .wide, .cells .near { margin-left: 1px; }
.cells .tight { margin-left: 0; }
.cells .g4 { margin-left: 4px; }
.cells .g3 { margin-left: 3px; }
.cells .last { margin-left: 5px; }

.taskbar { display: flex; height: 40px; background: linear-gradient(90deg, #cfe5eb, #d1e8ed 55%, #d4dceb 82%, #d4d9e7); color: #111; }
.search { display: flex; align-items: center; width: 287px; height: 39px; margin-top: 1px; border: 1px solid #c8cccd; background: #fff; font-size: 14.2px; color: #333; letter-spacing: -.2px; }
.spark { margin-left: auto; }
.open { border-bottom: 2px solid #0078d7; height: 40px; }
.active { background: #e9f3f7; }
.tray { margin-left: 453px; }
.lang { width: 39px; padding-left: 3px; line-height: 39px; font-size: 11.4px; }
.clock { display: flex; flex-direction: column; align-items: center; width: 58px; margin-right: 13px; padding-top: 2px; line-height: 18px; font-size: 11.2px; }
```
